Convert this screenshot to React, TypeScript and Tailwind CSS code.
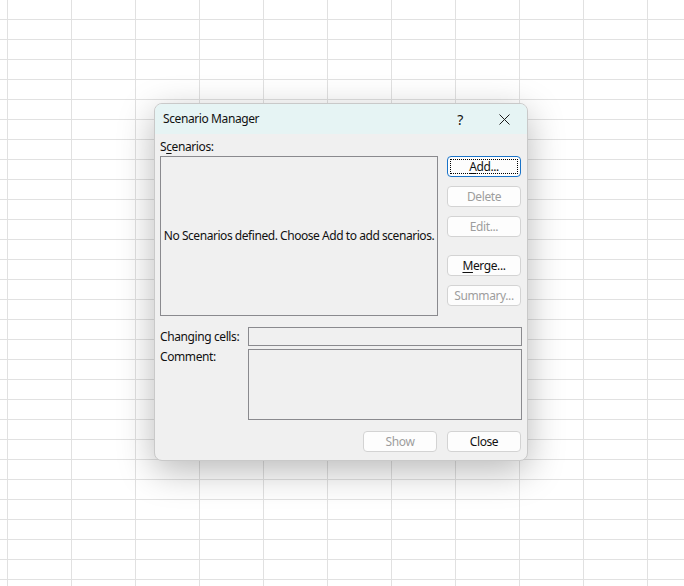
import React from "react";

const font = { fontFamily: '"Noto Sans", "Open Sans", Arial, sans-serif' };

function DlgButton({
  children,
  disabled,
  focused,
  className = "",
}: {
  children: React.ReactNode;
  disabled?: boolean;
  focused?: boolean;
  className?: string;
}) {
  return (
    <button
      className={
        "relative flex h-[21px] w-[74px] items-center justify-center rounded-[4px] border bg-[#fdfdfd] text-[12px] leading-none tracking-[-0.4px] " +
        (focused ? "border-[#1a73c8] " : "border-[#d3d3d3] ") +
        (disabled ? "text-[#9d9d9d] " : "text-[#111111] ") +
        className
      }
    >
      {focused && (
        <span className="pointer-events-none absolute inset-[2px] border border-dotted border-black" />
      )}
      {children}
    </button>
  );
}

export default function App() {
  return (
    <div
      style={font}
      className="h-[586px] w-[684px] overflow-hidden bg-white bg-[linear-gradient(to_right,#e1e1e1_1px,transparent_1px),linear-gradient(to_bottom,#e1e1e1_1px,transparent_1px)] bg-size-[64px_20px] bg-position-[7px_19px] pl-[154px] pt-[103px]"
    >
      {/* Dialog */}
      <div className="w-[374px] overflow-hidden rounded-[8px] border border-[#c9c9c9] bg-[#f0f0f0] tracking-[-0.4px] shadow-[0_10px_36px_rgba(0,0,0,0.28)]">
        {/* Title bar */}
        <div className="flex h-[30px] items-center bg-[#e6f4f4] pl-[8px]">
          <span className="text-[12px] text-[#111111]">Scenario Manager</span>
          <span className="ml-auto mr-[36px] text-[14px] text-[#111111]">?</span>
          <svg width="11" height="11" viewBox="0 0 11 11" className="mr-[17px]">
            <path d="M0.5 0.5 L10.5 10.5 M10.5 0.5 L0.5 10.5" stroke="#1a1a1a" strokeWidth="1" />
          </svg>
        </div>

        {/* Body */}
        <div className="px-[5px] pb-[8px] pt-[5px] text-[12px] text-[#111111]">
          <div className="flex gap-[9px]">
            <div className="flex flex-col">
              <span className="h-[17px] leading-[15px]">
                S<span className="underline underline-offset-2">c</span>enarios:
              </span>
              <div className="flex h-[160px] w-[278px] items-center justify-center whitespace-nowrap border border-[#8a8a8e] bg-[#f0f0f0] text-[12px] tracking-[-0.45px]">
                No Scenarios defined. Choose Add to add scenarios.
              </div>
            </div>
            <div className="mt-[17px] flex flex-col">
              <DlgButton focused>
                <span>
                  <span className="underline underline-offset-2">A</span>dd...
                </span>
              </DlgButton>
              <DlgButton disabled className="mt-[9px]">
                Delete
              </DlgButton>
              <DlgButton disabled className="mt-[9px]">
                Edit...
              </DlgButton>
              <DlgButton className="mt-[18px]">
                <span>
                  <span className="underline underline-offset-2">M</span>erge...
                </span>
              </DlgButton>
              <DlgButton disabled className="mt-[9px]">
                Summary...
              </DlgButton>
            </div>
          </div>

          <div className="mt-[11px] flex items-center">
            <span className="w-[88px]">Changing cells:</span>
            <div className="h-[19px] w-[275px] border border-[#8a8a8e]" />
          </div>
          <div className="mt-[3px] flex items-start">
            <span className="mt-0 w-[88px] leading-[16px]">Comment:</span>
            <div className="h-[71px] w-[275px] border border-[#8a8a8e]" />
          </div>

          <div className="mt-[11px] flex justify-end gap-[10px] pr-[1px]">
            <DlgButton disabled>Show</DlgButton>
            <DlgButton>Close</DlgButton>
          </div>
        </div>
      </div>
    </div>
  );
}
